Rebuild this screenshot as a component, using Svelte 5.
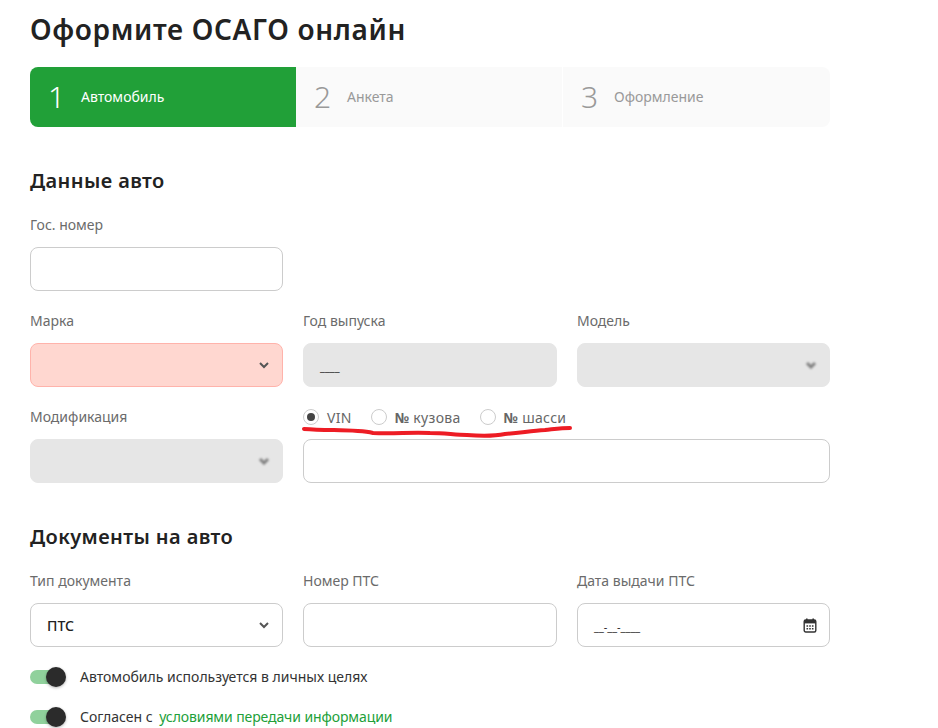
<script>
  const steps = [
    { num: 1, title: 'Автомобиль', active: true },
    { num: 2, title: 'Анкета', active: false },
    { num: 3, title: 'Оформление', active: false }
  ];
  const radios = [
    { mark: '', text: 'VIN', checked: true },
    { mark: '№', text: 'кузова', checked: false },
    { mark: '№', text: 'шасси', checked: false }
  ];
</script>

<style>
  :global(body) {
    background: #fff;
    color: #222;
    font-family: "Noto Sans", "Open Sans", sans-serif;
  }

  .page {
    position: relative;
    width: 800px;
    height: 728px;
    padding: 9px 0 0 30px;
    overflow: hidden;
  }

  h1 {
    margin: 0 0 18px;
    height: 40px;
    font-size: 28px;
    line-height: 40px;
    font-weight: 600;
    letter-spacing: 0.65px;
    color: #222;
  }

  h2 {
    margin: 42px 0 22px;
    height: 24px;
    font-size: 20px;
    line-height: 24px;
    font-weight: 600;
    letter-spacing: 0.4px;
    color: #222;
  }

  .steps {
    display: grid;
    grid-template-columns: 266px 266px 268px;
    height: 60px;
  }

  .step {
    display: flex;
    align-items: center;
    padding-left: 18px;
    background: #fafafa;
    color: #999;
    font-size: 14px;
    line-height: 18px;
  }

  .step:first-child { border-radius: 8px 0 0 8px; }
  .step:last-child {
    border-radius: 0 8px 8px 0;
    border-left: 1px solid #fff;
  }

  .step.active {
    background: #21a038;
    color: #fff;
  }

  .num {
    width: 33px;
    font-size: 30px;
    font-weight: 300;
    line-height: 36px;
  }

  .grid {
    display: grid;
    grid-template-columns: 253px 254px 253px;
    gap: 20px;
  }

  .full { grid-column: 1; }
  .wide { grid-column: 2 / 4; }

  .label {
    height: 20px;
    margin-bottom: 12px;
    font-size: 14px;
    line-height: 20px;
    color: #6b6b6b;
  }

  .box {
    position: relative;
    display: flex;
    align-items: center;
    box-sizing: border-box;
    height: 44px;
    padding-left: 16px;
    border: 1px solid #ccc;
    border-radius: 8px;
    font-size: 14px;
    font-weight: 500;
    color: #222;
  }

  .box.error {
    background: #ffd7d0;
    border-color: #ffb3ab;
  }

  .box.disabled {
    background: #e6e6e6;
    border-color: #e6e6e6;
  }

  .mask {
    padding-top: 3px;
    font-size: 11px;
    font-weight: 400;
  }

  .arrow {
    position: absolute;
    right: 12px;
    top: 17px;
    width: 12px;
    height: 8px;
  }

  .disabled .arrow {
    filter: blur(1px);
    opacity: 0.7;
  }

  .disabled .arrow path { stroke-width: 3; }

  .cal {
    position: absolute;
    right: 12px;
    top: 14px;
    width: 14px;
    height: 15px;
  }

  .radios {
    display: flex;
    align-items: center;
    height: 20px;
    margin-bottom: 12px;
    font-size: 14px;
    letter-spacing: 0.3px;
    color: #666;
  }

  .radio {
    display: flex;
    align-items: center;
    gap: 8px;
    margin-right: 19px;
  }

  .dot {
    display: flex;
    align-items: center;
    justify-content: center;
    box-sizing: border-box;
    width: 16px;
    height: 16px;
    border: 1px solid #ccc;
    border-radius: 50%;
  }

  .dot i {
    width: 8px;
    height: 8px;
    border-radius: 50%;
    background: #444;
  }

  .radio b { font-weight: 700; }

  .toggles {
    display: flex;
    flex-direction: column;
    gap: 20px;
    margin-top: 20px;
  }

  .toggle {
    display: flex;
    align-items: center;
    height: 20px;
    font-size: 14px;
    color: #333;
  }

  .toggle-text { padding-bottom: 2px; }

  .track {
    position: relative;
    width: 28px;
    height: 14px;
    margin-right: 22px;
    border-radius: 7px;
    background: #90d19c;
  }

  .knob {
    position: absolute;
    top: -3px;
    left: 16px;
    width: 20px;
    height: 20px;
    border-radius: 50%;
    background: #2b2b2b;
    box-shadow: 0 1px 3px rgba(0, 0, 0, 0.3);
  }

  .link {
    margin-left: 3px;
    letter-spacing: -0.1px;
    color: #21a038;
  }

  .scribble {
    position: absolute;
    left: 0;
    top: 0;
    pointer-events: none;
  }
</style>

{#snippet arrow()}
  <svg class="arrow" viewBox="0 0 12 8"><path d="M2 2l4 4 4-4" fill="none" stroke="#555" stroke-width="2"/></svg>
{/snippet}

<div class="page">
  <h1>Оформите ОСАГО онлайн</h1>

  <div class="steps">
    {#each steps as s}
      <div class="step" class:active={s.active}>
        <span class="num">{s.num}</span>
        <span>{s.title}</span>
      </div>
    {/each}
  </div>

  <h2>Данные авто</h2>

  <div class="grid">
    <div class="full">
      <div class="label">Гос. номер</div>
      <div class="box"></div>
    </div>
    <div class="full">
      <div class="label">Марка</div>
      <div class="box error">{@render arrow()}</div>
    </div>
    <div>
      <div class="label">Год выпуска</div>
      <div class="box disabled"><span class="mask">____</span></div>
    </div>
    <div>
      <div class="label">Модель</div>
      <div class="box disabled">{@render arrow()}</div>
    </div>
    <div>
      <div class="label">Модификация</div>
      <div class="box disabled">{@render arrow()}</div>
    </div>
    <div class="wide">
      <div class="radios">
        {#each radios as r}
          <div class="radio">
            <span class="dot">{#if r.checked}<i></i>{/if}</span>
            <span>{#if r.mark}<b>{r.mark}</b>{' '}{/if}{r.text}</span>
          </div>
        {/each}
      </div>
      <div class="box"></div>
    </div>
  </div>

  <h2>Документы на авто</h2>

  <div class="grid">
    <div>
      <div class="label">Тип документа</div>
      <div class="box">ПТС{@render arrow()}</div>
    </div>
    <div>
      <div class="label">Номер ПТС</div>
      <div class="box"></div>
    </div>
    <div>
      <div class="label">Дата выдачи ПТС</div>
      <div class="box">
        <span class="mask">__-__-____</span>
        <svg class="cal" viewBox="0 0 14 15">
          <path d="M3 0.5h1.6v2H3zM9.4 0.5H11v2H9.4z" fill="#333"/>
          <rect x="1.2" y="2" width="11.6" height="12" rx="1.5" fill="none" stroke="#333" stroke-width="1.4"/>
          <rect x="1.2" y="2" width="11.6" height="3.4" fill="#333"/>
          <path d="M3.5 7.2h1.6v1.6H3.5zM6.2 7.2h1.6v1.6H6.2zM8.9 7.2h1.6v1.6H8.9zM3.5 10h1.6v1.6H3.5zM6.2 10h1.6v1.6H6.2zM8.9 10h1.6v1.6H8.9z" fill="#333"/>
        </svg>
      </div>
    </div>
  </div>

  <div class="toggles">
    <div class="toggle">
      <span class="track"><span class="knob"></span></span>
      <span class="toggle-text">Автомобиль используется в личных целях</span>
    </div>
    <div class="toggle">
      <span class="track"><span class="knob"></span></span>
      <span class="toggle-text">Согласен с <span class="link">условиями передачи информации</span></span>
    </div>
  </div>

  <!-- red marker line drawn over the radios -->
  <svg class="scribble" width="800" height="728" viewBox="0 0 800 728">
    <path d="M304 429 C330 431 355 429 373 433 C395 434 410 432 430 433 C445 433 455 435 467 435 C480 436 495 436 505 434 C520 433 530 431 545 430 C555 429 562 428 570 428" fill="none" stroke="#ed1c24" stroke-width="4" stroke-linecap="round"/>
  </svg>
</div>
